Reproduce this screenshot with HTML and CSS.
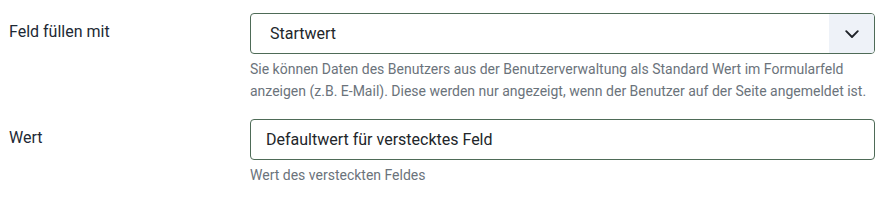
FILE: index.html
```html
<!DOCTYPE html>
<html lang="de">
<head>
<meta charset="utf-8">
<link rel="stylesheet" href="styles.css">
</head>
<body>
<div class="form">
  <div class="row row-first">
    <div class="label">Feld füllen mit</div>
    <div class="controls">
      <div class="select">
        <span class="select-value">Startwert</span>
        <span class="select-arrow">
          <svg width="16" height="16" viewBox="0 0 16 16"><path d="M2.2 5.2 L8 11 L13.8 5.2" fill="none" stroke="#1f2329" stroke-width="1.9" stroke-linecap="round" stroke-linejoin="round"/></svg>
        </span>
      </div>
      <div class="desc">Sie können Daten des Benutzers aus der Benutzerverwaltung als Standard Wert im Formularfeld anzeigen (z.B. E-Mail). Diese werden nur angezeigt, wenn der Benutzer auf der Seite angemeldet ist.</div>
    </div>
  </div>
  <div class="row row-second">
    <div class="label">Wert</div>
    <div class="controls">
      <div class="input">Defaultwert für verstecktes Feld</div>
      <div class="desc">Wert des versteckten Feldes</div>
    </div>
  </div>
</div>
</body>
</html>
```

FILE: styles.css
```css
html, body {
  margin: 0;
  padding: 0;
  background: #fff;
}
body {
  font-family: Roboto, "Liberation Sans", sans-serif;
  color: #22262a;
}
.form {
  padding: 13px 0 0 9px;
}
.row {
  display: grid;
  grid-template-columns: 241px 625px;
}
.row-second {
  margin-top: 17px;
}
.label {
  font-size: 16px;
  line-height: 20px;
  color: #1d2935;
  padding-top: 9px;
}
.select, .input {
  box-sizing: border-box;
  height: 41px;
  border: 1px solid #4e6b57;
  border-radius: 4px;
  font-size: 16px;
  display: flex;
  align-items: center;
  overflow: hidden;
}
.select-value {
  flex: 1;
  padding-left: 19px;
}
.select-arrow {
  width: 45px;
  align-self: stretch;
  background: #eef2f8;
  display: flex;
  align-items: center;
  justify-content: center;
}
.input {
  padding-left: 15px;
}
.desc {
  font-size: 14px;
  line-height: 22px;
  color: #6b737b;
  margin-top: 4px;
}
```
